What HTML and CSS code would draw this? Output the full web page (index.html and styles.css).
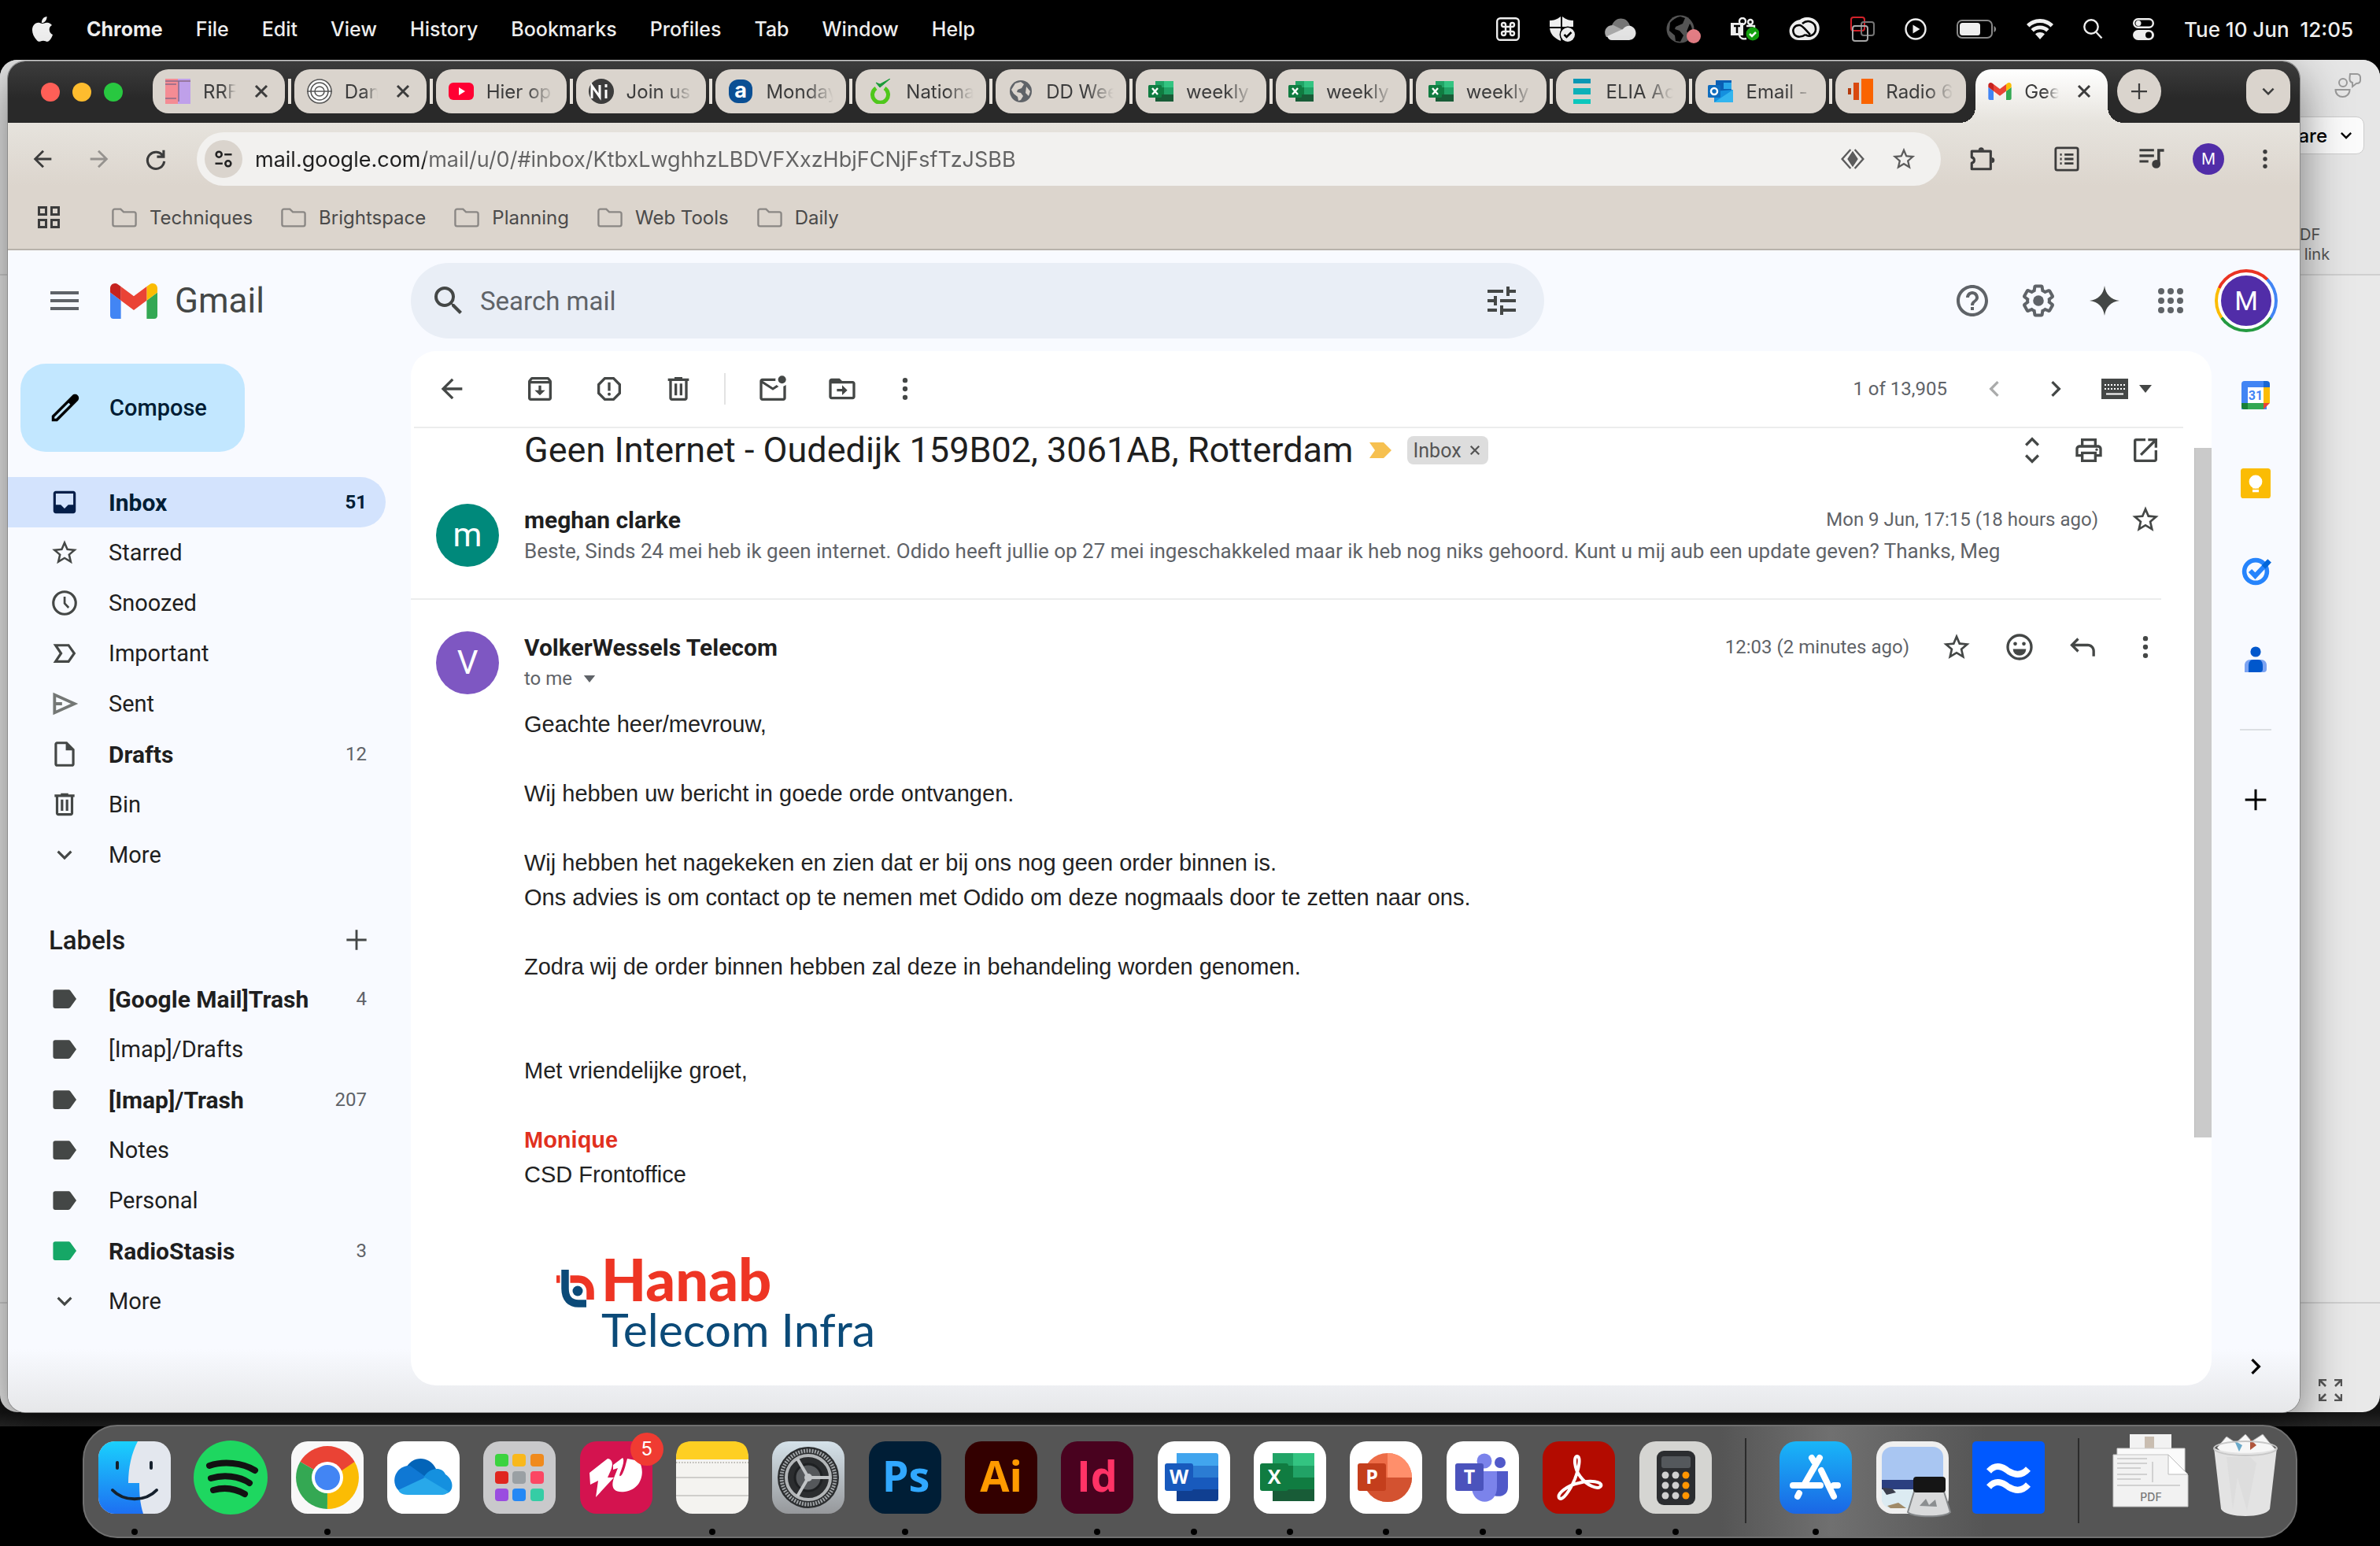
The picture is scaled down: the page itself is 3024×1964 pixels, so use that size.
FILE: index.html
```html
<!DOCTYPE html>
<html lang="en">
<head>
  <meta charset="UTF-8">
  <meta name="viewport" content="width=device-width, initial-scale=1.0">
  <title>Geen Internet - Gmail</title>
  <link rel="stylesheet" href="styles.css">
</head>
<body>
  <!-- icon sprite -->
  <svg class="sprite" aria-hidden="true">
    <symbol id="i-menu" viewBox="0 0 24 24"><path d="M3 18h18v-2H3v2zm0-5h18v-2H3v2zm0-7v2h18V6H3z"/></symbol>
    <symbol id="i-search" viewBox="0 0 24 24"><path d="M15.5 14h-.79l-.28-.27A6.471 6.471 0 0 0 16 9.5 6.5 6.5 0 1 0 9.5 16c1.61 0 3.09-.59 4.23-1.57l.27.28v.79l5 4.99L20.49 19l-4.99-5zm-6 0C7.01 14 5 11.99 5 9.5S7.01 5 9.5 5 14 7.01 14 9.5 11.99 14 9.5 14z"/></symbol>
    <symbol id="i-tune" viewBox="0 0 24 24"><path d="M3 17v2h6v-2H3zM3 5v2h10V5H3zm10 16v-2h8v-2h-8v-2h-2v6h2zM7 9v2H3v2h4v2h2V9H7zm14 4v-2H11v2h10zm-6-4h2V7h4V5h-4V3h-2v6z"/></symbol>
    <symbol id="i-help" viewBox="0 0 24 24"><path d="M11 18h2v-2h-2v2zm1-16C6.48 2 2 6.48 2 12s4.48 10 10 10 10-4.48 10-10S17.52 2 12 2zm0 18c-4.41 0-8-3.59-8-8s3.59-8 8-8 8 3.59 8 8-3.59 8-8 8zm0-14c-2.21 0-4 1.79-4 4h2c0-1.1.9-2 2-2s2 .9 2 2c0 2-3 1.75-3 5h2c0-2.25 3-2.5 3-5 0-2.21-1.79-4-4-4z"/></symbol>
    <symbol id="i-gear" viewBox="0 0 24 24"><path d="M13.85 22.25h-3.7c-.74 0-1.36-.54-1.45-1.27l-.27-1.89c-.27-.14-.53-.29-.79-.46l-1.8.72c-.7.26-1.47-.03-1.81-.65L2.2 15.53c-.35-.66-.2-1.44.36-1.88l1.53-1.19c-.01-.15-.02-.3-.02-.46 0-.15.01-.31.02-.46l-1.52-1.19c-.59-.45-.74-1.26-.37-1.88l1.85-3.19c.34-.62 1.11-.9 1.79-.63l1.81.73c.26-.17.52-.32.78-.46l.27-1.91c.09-.7.71-1.25 1.44-1.25h3.7c.74 0 1.36.54 1.45 1.27l.27 1.89c.27.14.53.29.79.46l1.8-.72c.71-.26 1.48.03 1.82.65l1.84 3.18c.36.66.2 1.44-.36 1.88l-1.52 1.19c.01.15.02.3.02.46s-.01.31-.02.46l1.52 1.19c.56.45.72 1.23.37 1.86l-1.86 3.22c-.34.62-1.11.9-1.8.63l-1.8-.72c-.26.17-.52.32-.78.46l-.27 1.91c-.1.68-.72 1.22-1.46 1.22zm-3.23-2h2.76l.37-2.55.53-.22c.44-.18.88-.44 1.34-.78l.45-.34 2.38.96 1.38-2.4-2.03-1.58.07-.56c.03-.26.06-.51.06-.78s-.03-.53-.06-.78l-.07-.56 2.03-1.58-1.39-2.4-2.39.96-.45-.35c-.42-.32-.87-.58-1.33-.77l-.52-.22-.37-2.55h-2.76l-.37 2.55-.53.21c-.44.19-.88.44-1.34.79l-.45.33-2.38-.95-1.39 2.39 2.03 1.58-.07.56a7 7 0 0 0-.06.79c0 .26.02.53.06.78l.07.56-2.03 1.58 1.38 2.4 2.39-.96.45.35c.43.33.86.58 1.33.77l.53.22.38 2.55z"/><circle cx="12" cy="12" r="3.4"/></symbol>
    <symbol id="i-spark" viewBox="0 0 24 24"><path d="M12 2.5c.8 5.6 3.9 8.700 9.500 9.500-5.600.8-8.700 3.900-9.500 9.500-.8-5.600-3.900-8.700-9.500-9.500 5.600-.8 8.700-3.900 9.500-9.500z"/></symbol>
    <symbol id="i-apps" viewBox="0 0 24 24"><circle cx="6" cy="6" r="2"/><circle cx="12" cy="6" r="2"/><circle cx="18" cy="6" r="2"/><circle cx="6" cy="12" r="2"/><circle cx="12" cy="12" r="2"/><circle cx="18" cy="12" r="2"/><circle cx="6" cy="18" r="2"/><circle cx="12" cy="18" r="2"/><circle cx="18" cy="18" r="2"/></symbol>
    <symbol id="i-pencil" viewBox="0 0 24 24"><path fill-rule="evenodd" d="M20.200 3.800c-1-1-2.600-1-3.600 0L3 17.300V21h3.700L20.200 7.400c1-1 1-2.600 0-3.600zM5.900 19.200H4.800v-1.100L14.200 8.700l1.100 1.100z"/></symbol>
    <symbol id="i-inbox" viewBox="0 0 24 24"><path d="M19 3H5c-1.100 0-2 .9-2 2v14c0 1.100.9 2 2 2h14c1.100 0 2-.9 2-2V5c0-1.100-.9-2-2-2zm0 11h-4l-3 3-3-3H5V5h14v9z"/></symbol>
    <symbol id="i-star" viewBox="0 0 24 24"><path d="M22 9.240l-7.190-.62L12 2 9.190 8.630 2 9.240l5.460 4.730L5.820 21 12 17.270 18.180 21l-1.630-7.030L22 9.240zM12 15.400l-3.760 2.270 1-4.280-3.320-2.880 4.380-.38L12 6.100l1.710 4.040 4.380.38-3.320 2.880 1 4.280L12 15.400z"/></symbol>
    <symbol id="i-clock" viewBox="0 0 24 24"><circle cx="12" cy="12" r="9" fill="none" stroke="currentColor" stroke-width="2"/><path d="M11.200 7h1.700v5l3 3.200-1.200 1.200-3.500-3.700z"/></symbol>
    <symbol id="i-important" viewBox="0 0 24 24"><path fill="none" stroke="currentColor" stroke-width="2" d="M4.800 5.500h10.400l4.600 6.500-4.600 6.500H4.800L9.200 12z"/></symbol>
    <symbol id="i-send" viewBox="0 0 24 24"><path fill="none" stroke="currentColor" stroke-width="2.400" d="M4 4.800v14.400L20 12zM4 12h6"/></symbol>
    <symbol id="i-file" viewBox="0 0 24 24"><path d="M14 2H6c-1.100 0-2 .9-2 2v16c0 1.100.9 2 2 2h12c1.100 0 2-.9 2-2V8l-6-6zM6 20V4h7v5h5v11H6z"/></symbol>
    <symbol id="i-bin" viewBox="0 0 24 24"><path d="M9 3v1H4v2h1v13c0 1.100.9 2 2 2h10c1.100 0 2-.9 2-2V6h1V4h-5V3H9zM7 6h10v13H7V6zm2 2v9h2V8H9zm4 0v9h2V8h-2z"/></symbol>
    <symbol id="i-down" viewBox="0 0 24 24"><path d="M16.590 8.590L12 13.170 7.410 8.590 6 10l6 6 6-6z"/></symbol>
    <symbol id="i-left" viewBox="0 0 24 24"><path d="M15.410 7.410L14 6l-6 6 6 6 1.410-1.410L10.830 12z"/></symbol>
    <symbol id="i-right" viewBox="0 0 24 24"><path d="M10 6L8.590 7.410 13.170 12l-4.580 4.590L10 18l6-6z"/></symbol>
    <symbol id="i-plus" viewBox="0 0 24 24"><path d="M20 11.100h-7.100V4h-1.800v7.100H4v1.800h7.100V20h1.800v-7.100H20z"/></symbol>
    <symbol id="i-label" viewBox="0 0 24 24"><path d="M4.500 4.500H15c.7 0 1.300.3 1.700.9L21.500 12l-4.800 6.600c-.4.600-1 .9-1.700.9H4.500c-1 0-1.700-.7-1.700-1.700V6.200c0-1 .7-1.700 1.700-1.700z"/></symbol>
    <symbol id="i-back" viewBox="0 0 24 24"><path d="M20 11H7.830l5.590-5.590L12 4l-8 8 8 8 1.410-1.410L7.830 13H20z"/></symbol>
    <symbol id="i-archive" viewBox="0 0 24 24"><path d="M20.540 5.230l-1.390-1.680C18.880 3.210 18.470 3 18 3H6c-.47 0-.88.21-1.160.55L3.460 5.230C3.170 5.570 3 6.020 3 6.500V19c0 1.100.9 2 2 2h14c1.100 0 2-.9 2-2V6.500c0-.48-.17-.93-.46-1.270zM6.240 5h11.520l.83 1H5.420l.82-1zM5 19V8h14v11H5z"/><path d="M13 9.500h-2V13H8l4 4 4-4h-3z"/></symbol>
    <symbol id="i-spam" viewBox="0 0 24 24"><path d="M15.730 3H8.270L3 8.270v7.460L8.270 21h7.460L21 15.730V8.270L15.730 3zM19 14.900L14.900 19H9.100L5 14.900V9.100L9.100 5h5.800L19 9.100v5.800z"/><path d="M11 7h2v6.500h-2z"/><circle cx="12" cy="16" r="1.200"/></symbol>
    <symbol id="i-unread" viewBox="0 0 24 24"><path d="M20 10v9H4V8l8 5 4.500-2.800a5 5 0 0 1-1.600-1.200L12 10.900 4.400 6H14a5 5 0 0 1 .1-2H4c-1.100 0-2 .9-2 2v13c0 1.100.9 2 2 2h16c1.100 0 2-.9 2-2V9c-.6.500-1.300.8-2 1z"/><circle cx="19" cy="5" r="3"/></symbol>
    <symbol id="i-move" viewBox="0 0 24 24"><path d="M20 6h-8l-2-2H4c-1.100 0-2 .9-2 2v12c0 1.100.9 2 2 2h16c1.100 0 2-.9 2-2V8c0-1.100-.9-2-2-2zm0 12H4V8h16v10z"/><path d="M12 9.200V12H8v2h4v2.800l4-3.800z"/></symbol>
    <symbol id="i-dots" viewBox="0 0 24 24"><circle cx="12" cy="5.500" r="1.900"/><circle cx="12" cy="12" r="1.900"/><circle cx="12" cy="18.500" r="1.900"/></symbol>
    <symbol id="i-keyboard" viewBox="0 0 34 26"><path d="M0 0h34v26H0z"/><path d="M4 8h26M4 13h26" stroke="#fff" stroke-width="2" stroke-dasharray="2 2"/><path d="M6 19.500h22" stroke="#fff" stroke-width="2"/></symbol>
    <symbol id="i-caret" viewBox="0 0 16 10"><path d="M0 0h16L8 10z"/></symbol>
    <symbol id="i-expand" viewBox="0 0 24 24"><path d="M12 4.800l4 4L17.400 7.400 12 2 6.600 7.400 8 8.800zM12 19.200l-4-4-1.400 1.400L12 22l5.400-5.400-1.400-1.400z"/></symbol>
    <symbol id="i-print" viewBox="0 0 24 24"><path d="M19 8h-1V3H6v5H5c-1.660 0-3 1.340-3 3v6h4v4h12v-4h4v-6c0-1.660-1.340-3-3-3zM8 5h8v3H8V5zm8 14H8v-4h8v4zm2-4v-2H6v2H4v-4c0-.55.45-1 1-1h14c.55 0 1 .45 1 1v4h-2z"/><circle cx="18" cy="11.500" r="1"/></symbol>
    <symbol id="i-popout" viewBox="0 0 24 24"><path d="M19 19H5V5h7V3H5a2 2 0 0 0-2 2v14a2 2 0 0 0 2 2h14c1.100 0 2-.9 2-2v-7h-2v7zM14 3v2h3.590l-9.830 9.830 1.410 1.410L19 6.410V10h2V3h-7z"/></symbol>
    <symbol id="i-smile" viewBox="0 0 24 24"><circle cx="12" cy="12" r="9" fill="none" stroke="currentColor" stroke-width="2"/><circle cx="8.700" cy="9.500" r="1.400"/><circle cx="15.300" cy="9.500" r="1.400"/><path d="M7 13.500h10a5 5 0 0 1-10 0z"/></symbol>
    <symbol id="i-reply" viewBox="0 0 24 24"><path d="M8 5L2.500 10.500 8 16l1.400-1.400-3.100-3.100H16c2 0 3.500 1.500 3.500 3.500v4h2v-4c0-3-2.500-5.500-5.500-5.500H6.300l3.100-3.100z"/></symbol>
    <symbol id="i-x" viewBox="0 0 24 24"><path d="M5 5l14 14M19 5L5 19" fill="none" stroke="currentColor" stroke-width="3"/></symbol>
    <symbol id="i-folder" viewBox="0 0 34 26"><path d="M4 1.500h8l4 4h14a2.500 2.500 0 0 1 2.500 2.500v14a2.500 2.500 0 0 1-2.500 2.500H4A2.500 2.500 0 0 1 1.500 22V4A2.500 2.500 0 0 1 4 1.500z" fill="none" stroke="currentColor" stroke-width="2.500"/></symbol>
    <symbol id="i-m" viewBox="52 42 88 66"><path fill="#4285f4" d="M58 108h14V74L52 59v43c0 3.320 2.690 6 6 6"/><path fill="#34a853" d="M120 108h14c3.320 0 6-2.690 6-6V59l-20 15"/><path fill="#fbbc04" d="M120 48v26l20-15v-8c0-7.420-8.470-11.650-14.400-7.200"/><path fill="#ea4335" d="M72 74V48l24 18 24-18v26L96 92"/><path fill="#c5221f" d="M52 51v8l20 15V48l-5.600-4.200c-5.940-4.450-14.400-.22-14.400 7.200"/></symbol>
    <symbol id="i-excel" viewBox="0 0 32 32"><path fill="#21a366" d="M9 3h23v26H9z"/><path fill="#33c481" d="M20 3h12v8H20z"/><path fill="#107c41" d="M9 11h11v9H9z"/><path fill="#185c37" d="M9 20h23v9H9z"/><rect y="8" width="17" height="16" rx="1.500" fill="#107c41"/><path d="M5 12l7 8M12 12l-7 8" stroke="#fff" stroke-width="2.400"/></symbol>
    <symbol id="i-globe" viewBox="0 0 32 32"><circle cx="16" cy="16" r="14" fill="currentColor"/><path fill="#dad4cd" d="M9 6l7-2 4 3-3 5-5 2-1 3 5 1 3 4-3 5-3 1-1-5-5-4-3-5zM23 10l5 6-2 6-4-4z"/></symbol>
  </svg>

  <header class="menubar">
    <nav class="menus">
      <svg class="apple" viewBox="0 0 28 32"><path d="M19.500 0c.2 2.500-.8 4.600-2 6-1.200 1.300-2.900 2.200-4.600 2-.2-2.300.8-4.500 2-5.800C16.100.9 18 .1 19.500 0zM26 11c-2.200 1.400-3.400 3.200-3.300 5.800.1 3 1.700 5 4.300 6.200-1 3-2.400 5.500-4.300 7.500-1.700 1.800-3.200 1.600-5 .8-1.900-.8-3.600-.8-5.600 0-2.200 1-3.600.7-5.200-1C.7 24-.6 15.500 2.800 11c1.800-2.400 4-3.300 6.300-3.200 2 .1 3.600 1.300 4.900 1.300 1.200 0 3.400-1.500 6-1.300 2.400.2 4.600 1.200 6 3.200z"/></svg>
      <button class="menu app">Chrome</button>
      <button class="menu">File</button>
      <button class="menu">Edit</button>
      <button class="menu">View</button>
      <button class="menu">History</button>
      <button class="menu">Bookmarks</button>
      <button class="menu">Profiles</button>
      <button class="menu">Tab</button>
      <button class="menu">Window</button>
      <button class="menu">Help</button>
    </nav>
    <div class="status">
      <svg width="30" height="30" viewBox="0 0 30 30" class="line"><rect x="1.200" y="1.200" width="27.600" height="27.600" rx="4"/><path d="M12 12V9.500A2.500 2.500 0 1 0 9.500 12h11A2.500 2.500 0 1 0 18 9.500v11a2.500 2.500 0 1 0 2.500-2.500h-11a2.500 2.500 0 1 0 2.500 2.500z"/></svg>
      <svg width="32" height="32" viewBox="0 0 32 32"><path d="M14 0v13H0V5c5 0 9-1 14-5zM16 0c5 4 9 5 14 5v8H16zM0 15h14v16C5 27 1 22 0 15z"/><circle cx="23" cy="23" r="10.500" fill="#000"/><circle cx="23" cy="23" r="9"/><path d="M18.500 23l3 3 6-6" fill="none" stroke="#000" stroke-width="2.500"/></svg>
      <svg width="40" height="28" viewBox="0 0 40 28"><path fill="#777" d="M9 9C12 2 18-1 24 1c4 1 7 5 8 9l-12 6z"/><path fill="#aaa" d="M2 24C-3 16 3 8 11 9l12 6-20 9z"/><path fill="#e6e6e6" d="M3 23l20-9c4-5 9-5 12-3 7 4 6 16-4 17H9c-3 0-5-2-6-5z"/></svg>
      <svg width="44" height="38" viewBox="0 0 44 38"><circle cx="18" cy="19" r="17.500" fill="#555"/><path fill="#000" d="M5 11c3-4 8-7 13-8l6 2-3 7-9 4-1 3 6 2 5 6-4 8-6-1-1-7-7-6zM30 12c3 4 4 10 2 14l-6-4z"/><circle cx="35" cy="28" r="9" fill="#e67f86"/></svg>
      <svg width="36" height="30" viewBox="0 0 36 30"><g class="line"><circle cx="15" cy="5" r="4"/><circle cx="25" cy="6" r="3"/><path d="M20 11h10v9M11 23c1 4 5 5 9 4"/></g><path d="M0 7h16v16H0z"/><path d="M4 11h8M8 11v9" stroke="#000" stroke-width="2.500"/><circle cx="28" cy="21" r="8.500" fill="#13a10e"/><path d="M24 21l3 3 5-5" fill="none" stroke="#fff" stroke-width="2.500"/></svg>
      <svg width="40" height="30" viewBox="0 0 40 30"><path d="M14 3C20-2 32-1 37 7c5 9-1 22-13 22H13C4 29-1 22 1 14 3 8 8 4 14 3z"/><path d="M21 22c-4 3-11 4-14 0-4-6 0-13 7-12 4 1 7 6 13 12M17 8c7-6 17-2 17 7 0 7-8 11-13 7" fill="none" stroke="#000" stroke-width="2.500"/></svg>
      <svg width="31" height="32" viewBox="0 0 31 32" fill="none" stroke-width="2"><rect x="1" y="1" width="17" height="17" rx="3" stroke="#d3222a"/><rect x="14" y="7" width="16" height="17" rx="3" stroke="#777"/><rect x="3" y="12" width="19" height="19" rx="3" stroke="#aaa"/></svg>
      <svg width="28" height="28" viewBox="0 0 28 28"><circle cx="14" cy="14" r="12.500" class="line"/><path d="M10.500 8.500v11l9-5.500z"/></svg>
      <svg width="51" height="24" viewBox="0 0 51 24"><rect x="1" y="1" width="44" height="22" rx="6" fill="none" stroke="#8a8a8a" stroke-width="2"/><rect x="4" y="4" width="26" height="16" rx="3.500"/><path fill="#8a8a8a" d="M47.500 8c3.500 1.500 3.500 6.500 0 8z"/></svg>
      <svg width="34" height="26" viewBox="0 0 34 26"><path d="M17 0c7 0 13 3 17 7l-3.500 3.500A19 19 0 0 0 17 5 19 19 0 0 0 3.500 10.500L0 7c4-4 10-7 17-7zm0 8.500c4.500 0 8.500 1.700 11.500 4.500L25 16.500c-2-2-5-3.200-8-3.200s-6 1.200-8 3.200L5.500 13c3-2.800 7-4.500 11.500-4.500zm0 8.500c2.300 0 4.300.9 6 2.300L17 26l-6-6.700c1.700-1.400 3.700-2.300 6-2.300z"/></svg>
      <svg width="25" height="26" viewBox="0 0 25 26"><g class="line"><circle cx="10" cy="10" r="8.700"/><path d="M16.500 17l7 7.500"/></g></svg>
      <svg width="27" height="28" viewBox="0 0 27 28"><rect x="1.200" y="1.200" width="24.600" height="10.600" rx="5.300" class="line"/><circle cx="7" cy="6.500" r="3.500"/><rect y="15" width="27" height="13" rx="6.500"/><circle cx="20" cy="21.500" r="4" fill="#000"/></svg>
      <time>Tue 10 Jun&nbsp; 12:05</time>
    </div>
  </header>

  <main class="desktop">
    <div class="window-dark"></div>

    <section class="window-back">
      <div class="back-top">
        <svg width="34" height="34" viewBox="0 0 34 34" class="people"><circle cx="11" cy="13" r="5"/><path d="M1.500 22h18c0 12-18 12-18 0zM20 2h9c2 0 4 2 4 4v4c0 3-2 4-5 4l-5 4v-5c-4-1-4-4-3-11z"/></svg>
        <button class="share">are <svg width="28" height="28"><use href="#i-down"/></svg></button>
        <p class="pdf-link">DF<br>&nbsp;link</p>
      </div>
      <div class="back-bottom">
        <svg width="30" height="28" viewBox="0 0 30 28"><path d="M10 1H1v8M1 1l8 8M20 1h9v8M29 1l-8 8M10 27H1v-8M1 27l8-8M20 27h9v-8M29 27l-8-8"/></svg>
      </div>
    </section>

    <section class="window">
      <div class="tabstrip">
        <div class="lights"><button class="red" aria-label="Close"></button><button class="yellow" aria-label="Minimise"></button><button class="green" aria-label="Zoom"></button></div>
        <div class="tabs">
          <div class="tab"><svg viewBox="0 0 32 32"><path fill="#f48c94" d="M0 0h16v32H0z"/><path fill="#bfa0ea" d="M16 0h16v32H16z"/><path d="M0 3h32M0 7h14M17 3v26M0 25h14" stroke="#8a6a86" stroke-width="1.500"/></svg><a href="#">RRF</a><button class="close" aria-label="Close tab"><svg><use href="#i-x"/></svg></button></div>
          <div class="tab"><svg viewBox="0 0 32 32"><g fill="#fff" stroke="#555" stroke-width="1.500"><circle cx="16" cy="16" r="15"/><circle cx="16" cy="16" r="11"/><circle cx="16" cy="16" r="6"/><path d="M0 16h32"/></g></svg><a href="#">Dan</a><button class="close" aria-label="Close tab"><svg><use href="#i-x"/></svg></button></div>
          <div class="tab"><svg viewBox="0 0 32 32"><rect y="5" width="32" height="22" rx="6" fill="#f03"/><path fill="#fff" d="M13 11v10l8-5z"/></svg><a href="#">Hier op</a></div>
          <div class="tab"><svg viewBox="0 0 32 32"><circle cx="16" cy="16" r="16"/><path d="M4 25V9l10 14V8M22 14v11M22 7v4" fill="none" stroke="#fff" stroke-width="3"/></svg><a href="#">Join us</a></div>
          <div class="tab"><svg viewBox="0 0 32 32"><rect x="1" y="1" width="30" height="30" rx="12" fill="#0a4f94"/><text x="16" y="24" text-anchor="middle" class="fav-letter">a</text></svg><a href="#">Monday</a></div>
          <div class="tab"><svg viewBox="0 0 32 32"><path d="M21 12a10 10 0 1 1-11 0" fill="none" stroke="#4fc71c" stroke-width="5"/><path d="M10 5l5 6L28 0 15 7z" fill="#1b9b3a" stroke="#1b9b3a"/></svg><a href="#">National</a></div>
          <div class="tab"><svg class="fav-globe"><use href="#i-globe"/></svg><a href="#">DD Week</a></div>
          <div class="tab"><svg><use href="#i-excel"/></svg><a href="#">weekly</a></div>
          <div class="tab"><svg><use href="#i-excel"/></svg><a href="#">weekly</a></div>
          <div class="tab"><svg><use href="#i-excel"/></svg><a href="#">weekly</a></div>
          <div class="tab"><svg viewBox="0 0 32 32"><path fill="#0897b4" d="M6 0h22v6H6z"/><path fill="#0bb0b8" d="M6 12h22v8H6z"/><path fill="#0cc7bd" d="M6 26h22v6H6z"/></svg><a href="#">ELIA Ac</a></div>
          <div class="tab"><svg viewBox="0 0 32 32"><path fill="#0a5fb4" d="M10 2h20v14H10z"/><path fill="#28a8ea" d="M20 5h10v8H20z"/><path fill="#1490df" d="M8 16l24-2v16H8z"/><path fill="#50d9ff" d="M8 30l24-16v16z" opacity=".5"/><rect y="8" width="16" height="16" rx="1.500" fill="#0f6cbd"/><circle cx="8" cy="16" r="4" fill="none" stroke="#fff" stroke-width="2.500"/></svg><a href="#">Email -</a></div>
          <div class="tab"><svg viewBox="0 0 32 32"><path fill="#b33a0c" d="M0 12h4v8H0z"/><path fill="#d9480f" d="M7 5h7v22H7z"/><path fill="#fa6400" d="M17 0h15v32H17z"/></svg><a href="#">Radio 6</a></div>
          <div class="tab active"><svg class="fav-m"><use href="#i-m"/></svg><a href="#">Geen</a><button class="close" aria-label="Close tab"><svg><use href="#i-x"/></svg></button></div>
        </div>
        <div class="tab-actions">
          <button class="tab-new" aria-label="New tab"><svg><use href="#i-plus"/></svg></button>
          <button class="tab-list" aria-label="Search tabs"><svg><use href="#i-down"/></svg></button>
        </div>
      </div>

      <div class="toolbar">
        <div class="nav-row">
          <div class="nav-buttons">
            <button aria-label="Back"><svg><use href="#i-back"/></svg></button>
            <button aria-label="Forward" class="off"><svg class="flip"><use href="#i-back"/></svg></button>
            <button aria-label="Reload"><svg viewBox="0 0 24 24"><path d="M19 4v6h-6M18.500 9.500A7.500 7.500 0 1 0 19.500 14" fill="none" stroke="currentColor" stroke-width="2.200"/></svg></button>
          </div>
          <div class="omnibox">
            <button class="site-info" aria-label="Site information"><svg viewBox="0 0 24 24" fill="none" stroke="currentColor" stroke-width="2.200"><circle cx="7" cy="7" r="3"/><path d="M13 7h8M3 17h8"/><circle cx="17" cy="17" r="3"/></svg></button>
            <input class="url" type="text" aria-label="Address" value="mail.google.com/mail/u/0/#inbox/KtbxLwghhzLBDVFXxzHbjFCNjFsfTzJSBB">
            <button aria-label="Open in app"><svg viewBox="0 0 24 24" fill="none" stroke="currentColor" stroke-width="1.800"><path d="M10 3l-8 9 8 9M14 3l8 9-8 9"/><path d="M12 6l4 6-4 6-4-6z" fill="currentColor"/></svg></button>
            <button aria-label="Bookmark"><svg class="bookmark-star"><use href="#i-star"/></svg></button>
          </div>
          <div class="tools">
            <button class="wide" aria-label="Extensions"><svg viewBox="0 0 24 24"><path d="M3 5h17v16H3v-5.500c3-.5 3-4.500 0-5z" fill="none" stroke="currentColor" stroke-width="2.200" stroke-linejoin="round"/><path d="M9 4a2.500 2.500 0 0 1 5 0zM21 10.500a2.500 2.500 0 0 1 0 5z"/></svg></button>
            <button class="wide" aria-label="Reading list"><svg viewBox="0 0 24 24" fill="none" stroke="currentColor" stroke-width="2"><rect x="2" y="2" width="20" height="20" rx="1.500"/><path d="M6 8h1.500M6 12h1.500M6 16h1.500M10 8h8M10 12h8M10 16h8"/></svg></button>
            <button aria-label="Media"><svg viewBox="0 0 24 24"><path d="M1 3h13v2.200H1zM1 8h13v2.200H1zM1 13h8v2.200H1zM17 3h6v2.500h-3.500V16H17z"/><circle cx="16" cy="16.500" r="3.800"/></svg></button>
            <button class="profile">M</button>
            <button aria-label="Chrome menu"><svg><use href="#i-dots"/></svg></button>
          </div>
        </div>
        <nav class="bookmarks">
          <button class="groups" aria-label="Tab groups"><svg viewBox="0 0 28 28" fill="none" stroke="currentColor" stroke-width="3"><path d="M1.500 1.500h9v9h-9zM17.500 1.500h9v9h-9zM1.500 17.500h9v9h-9zM17.500 17.500h9v9h-9z"/></svg></button>
          <a href="#"><svg><use href="#i-folder"/></svg>Techniques</a>
          <a href="#"><svg><use href="#i-folder"/></svg>Brightspace</a>
          <a href="#"><svg><use href="#i-folder"/></svg>Planning</a>
          <a href="#"><svg><use href="#i-folder"/></svg>Web Tools</a>
          <a href="#"><svg><use href="#i-folder"/></svg>Daily</a>
        </nav>
      </div>

      <div class="gmail">
        <header class="gm-header">
          <div class="brand">
            <button aria-label="Main menu"><svg><use href="#i-menu"/></svg></button>
            <a href="#" class="logo"><svg><use href="#i-m"/></svg>Gmail</a>
          </div>
          <form class="search">
            <button type="button" aria-label="Search"><svg><use href="#i-search"/></svg></button>
            <input type="text" placeholder="Search mail" aria-label="Search mail">
            <button type="button" class="tune" aria-label="Search options"><svg><use href="#i-tune"/></svg></button>
          </form>
          <div class="gm-tools">
            <button aria-label="Support"><svg><use href="#i-help"/></svg></button>
            <button aria-label="Settings"><svg><use href="#i-gear"/></svg></button>
            <button class="dark" aria-label="Gemini"><svg><use href="#i-spark"/></svg></button>
            <button aria-label="Google apps"><svg><use href="#i-apps"/></svg></button>
            <button class="account" aria-label="Account"><span>M</span></button>
          </div>
        </header>

        <div class="gm-body">
          <aside class="sidebar">
            <button class="compose"><svg><use href="#i-pencil"/></svg>Compose</button>
            <nav>
              <a href="#" class="row current"><svg><use href="#i-inbox"/></svg><span>Inbox</span><em>51</em></a>
              <a href="#" class="row"><svg><use href="#i-star"/></svg><span>Starred</span></a>
              <a href="#" class="row"><svg><use href="#i-clock"/></svg><span>Snoozed</span></a>
              <a href="#" class="row"><svg><use href="#i-important"/></svg><span>Important</span></a>
              <a href="#" class="row"><svg class="soft"><use href="#i-send"/></svg><span>Sent</span></a>
              <a href="#" class="row bold"><svg><use href="#i-file"/></svg><span>Drafts</span><em>12</em></a>
              <a href="#" class="row"><svg><use href="#i-bin"/></svg><span>Bin</span></a>
              <a href="#" class="row"><svg><use href="#i-down"/></svg><span>More</span></a>
            </nav>
            <div class="labels-head"><h2>Labels</h2><button aria-label="Create new label"><svg><use href="#i-plus"/></svg></button></div>
            <nav>
              <a href="#" class="row bold"><svg><use href="#i-label"/></svg><span>[Google Mail]Trash</span><em>4</em></a>
              <a href="#" class="row"><svg><use href="#i-label"/></svg><span>[Imap]/Drafts</span></a>
              <a href="#" class="row bold"><svg><use href="#i-label"/></svg><span>[Imap]/Trash</span><em>207</em></a>
              <a href="#" class="row"><svg><use href="#i-label"/></svg><span>Notes</span></a>
              <a href="#" class="row"><svg><use href="#i-label"/></svg><span>Personal</span></a>
              <a href="#" class="row bold"><svg class="green-label"><use href="#i-label"/></svg><span>RadioStasis</span><em>3</em></a>
              <a href="#" class="row"><svg><use href="#i-down"/></svg><span>More</span></a>
            </nav>
          </aside>

          <article class="panel">
            <div class="panel-bar">
              <button class="to-inbox" aria-label="Back to Inbox"><svg><use href="#i-back"/></svg></button>
              <button aria-label="Archive"><svg><use href="#i-archive"/></svg></button>
              <button aria-label="Report spam"><svg><use href="#i-spam"/></svg></button>
              <button aria-label="Delete"><svg><use href="#i-bin"/></svg></button>
              <i class="divider"></i>
              <button aria-label="Mark as unread"><svg><use href="#i-unread"/></svg></button>
              <button class="move" aria-label="Move to"><svg><use href="#i-move"/></svg></button>
              <button aria-label="More"><svg><use href="#i-dots"/></svg></button>
              <span class="count">1 of 13,905</span>
              <button class="off" aria-label="Newer"><svg><use href="#i-left"/></svg></button>
              <button aria-label="Older"><svg><use href="#i-right"/></svg></button>
              <button class="input-tool" aria-label="Input tools"><svg class="keyboard"><use href="#i-keyboard"/></svg><svg class="caret"><use href="#i-caret"/></svg></button>
            </div>
            <div class="panel-scroll">
              <div class="thread">
                <div class="subject">
                  <h1>Geen Internet - Oudedijk 159B02, 3061AB, Rotterdam</h1>
                  <svg class="marker" viewBox="0 0 28 20"><path fill="#f6c050" d="M0 0h18l10 10-10 10H0l7-10z"/></svg>
                  <span class="chip">Inbox <button aria-label="Remove label"><svg><use href="#i-x"/></svg></button></span>
                  <div class="actions">
                    <button aria-label="Expand all"><svg><use href="#i-expand"/></svg></button>
                    <button aria-label="Print all"><svg><use href="#i-print"/></svg></button>
                    <button aria-label="In new window"><svg><use href="#i-popout"/></svg></button>
                  </div>
                </div>

                <section class="message folded">
                  <div class="avatar teal">m</div>
                  <div class="message-main">
                    <div class="message-head"><h3>meghan clarke</h3><time>Mon 9 Jun, 17:15 (18 hours ago)</time><button aria-label="Star"><svg><use href="#i-star"/></svg></button></div>
                    <p class="snippet">Beste, Sinds 24 mei heb ik geen internet. Odido heeft jullie op 27 mei ingeschakkeled maar ik heb nog niks gehoord. Kunt u mij aub een update geven? Thanks, Meg</p>
                  </div>
                </section>

                <section class="message">
                  <div class="avatar purple">V</div>
                  <div class="message-main">
                    <div class="message-head"><h3>VolkerWessels Telecom</h3><time>12:03 (2 minutes ago)</time><button aria-label="Star"><svg><use href="#i-star"/></svg></button><button aria-label="Add reaction"><svg><use href="#i-smile"/></svg></button><button aria-label="Reply"><svg><use href="#i-reply"/></svg></button><button aria-label="More"><svg><use href="#i-dots"/></svg></button></div>
                    <button class="to-me">to me <svg><use href="#i-caret"/></svg></button>
                    <div class="body">
                      <p>Geachte heer/mevrouw,</p>
                      <p>Wij hebben uw bericht in goede orde ontvangen.</p>
                      <p>Wij hebben het nagekeken en zien dat er bij ons nog geen order binnen is.<br>Ons advies is om contact op te nemen met Odido om deze nogmaals door te zetten naar ons.</p>
                      <p>Zodra wij de order binnen hebben zal deze in behandeling worden genomen.</p>
                      <p class="closing">Met vriendelijke groet,</p>
                      <p><b>Monique</b><br>CSD Frontoffice</p>
                    </div>
                    <div class="hanab">
                      <svg viewBox="0 0 48 48"><path d="M0 12h28c9 0 15 7 15 16v10" fill="none" stroke="#ee3524" stroke-width="9.500"/><path d="M11 0v24c0 13 7 19 17 19h10" fill="none" stroke="#fff" stroke-width="13"/><path d="M11 0v24c0 13 7 19 17 19h10" fill="none" stroke="#0b4a78" stroke-width="9.500"/><circle cx="27" cy="27" r="6.500" fill="#0b4a78"/></svg>
                      <div><strong>Hanab</strong><span>Telecom Infra</span></div>
                    </div>
                  </div>
                </section>
              </div>
              <div class="scrollbar"></div>
            </div>
          </article>

          <aside class="addons">
            <button aria-label="Calendar"><svg viewBox="0 0 24 24"><path fill="#4285f4" d="M3 5a2 2 0 0 1 2-2h14v18H3z"/><path fill="#1967d2" d="M17 3h2a2 2 0 0 1 2 2v2h-4z"/><path fill="#fbbc04" d="M17 7h4v10h-4z"/><path fill="#34a853" d="M3 17h14v4H5a2 2 0 0 1-2-2z"/><path fill="#ea4335" d="M17 17h4l-4 4z"/><path fill="#188038" d="M3 17h4v4H5a2 2 0 0 1-2-2z"/><path fill="#fff" d="M7 7h10v10H7z"/><text x="12" y="15" text-anchor="middle" class="cal-day">31</text></svg></button>
            <button aria-label="Keep"><svg viewBox="0 0 24 24"><rect x="2.500" y="2.500" width="19" height="19" rx="1.800" fill="#fbbc04"/><circle cx="12" cy="11" r="4.200" fill="#fff"/><path fill="#fff" d="M10 13h4v2.200h-4zM10 16h4v1.600h-4z"/></svg></button>
            <button aria-label="Tasks"><svg viewBox="0 0 24 24"><circle cx="12" cy="12" r="7.200" fill="none" stroke="#2684fc" stroke-width="2.800"/><path d="M8.500 11.500l3.200 3.300L20 6" fill="none" stroke="#2684fc" stroke-width="3"/><path d="M17 9.200l3.800-4" stroke="#0066da" stroke-width="3.200"/></svg></button>
            <button aria-label="Contacts"><svg viewBox="0 0 24 24"><circle cx="12" cy="7" r="3.300" fill="#0057cc"/><path fill="#7ba3f2" d="M5 20v-4.500c0-2 1.500-3.500 3.500-3.500h7c2 0 3.500 1.500 3.500 3.500V18a2 2 0 0 1-2 2z"/><path fill="#0057cc" d="M7.500 20v-4c0-2.500 1-4 3-4h3c2 0 3 1.500 3 4v2a2 2 0 0 1-2 2z"/></svg></button>
            <hr>
            <button class="black" aria-label="Get add-ons"><svg><use href="#i-plus"/></svg></button>
            <button class="black hide" aria-label="Hide side panel"><svg><use href="#i-right"/></svg></button>
          </aside>
        </div>
      </div>
    </section>

    <nav class="dock">
      <button class="app open" aria-label="Finder"><svg viewBox="0 0 92 92"><defs><linearGradient id="gf" x2="0" y2="1"><stop stop-color="#1ad1fd"/><stop offset="1" stop-color="#1d6ff2"/></linearGradient><clipPath id="cf"><rect width="92" height="92" rx="21"/></clipPath></defs><g clip-path="url(#cf)"><path fill="#e3e7ee" d="M0 0h92v92H0z"/><path fill="url(#gf)" d="M0 0h50c-8 15-12 34-12 53h14c0 14 1 26 5 39H0z"/></g><path d="M24 27v7M67 27v7M18 62c14 15 42 15 56 0" fill="none" stroke="#15202c" stroke-width="4" stroke-linecap="round"/></svg></button>
      <button class="app" aria-label="Spotify"><svg viewBox="0 0 92 92"><circle cx="46" cy="46" r="47" fill="#1ed760"/><path d="M19 31c18-6 42-4 58 6M21 47c16-5 36-3 49 6M24 62c14-4 28-2 40 5" fill="none" stroke="#121212" stroke-width="8" stroke-linecap="round"/></svg></button>
      <button class="app open" aria-label="Chrome"><svg viewBox="0 0 92 92"><rect width="92" height="92" rx="21" fill="#f8f8f8"/><path fill="#ea4335" d="M46 46L11.400 26a40 40 0 0 1 69.200 0z"/><path fill="#34a853" d="M46 46l-.1 40A40 40 0 0 1 11.400 26z"/><path fill="#fbbc04" d="M46 46l34.600-20A40 40 0 0 1 46 86z"/><path fill="#ea4335" d="M46 26h34.600L60 40z"/><path fill="#34a853" d="M11.400 26l17.300 30L46 60z"/><path fill="#fbbc04" d="M63.300 56L46 86l4-30z"/><circle cx="46" cy="46" r="20" fill="#fff"/><circle cx="46" cy="46" r="16" fill="#4285f4"/></svg></button>
      <button class="app" aria-label="OneDrive"><svg viewBox="0 0 92 92"><rect width="92" height="92" rx="21" fill="#fff"/><path fill="#0364b8" d="M24 34c6-14 28-18 38 1l-14 16z"/><path fill="#0f78d4" d="M14 62C3 50 12 30 29 31l28 20-24 12z"/><path fill="#1490df" d="M46 46c8-14 24-14 28-4 12 8 10 22 2 24z"/><path fill="#28a8ea" d="M14 62l34-16 30 18c-3 4-7 4-10 4H26c-6 0-10-2-12-6z"/></svg></button>
      <button class="app" aria-label="Launchpad"><svg viewBox="0 0 92 92"><rect width="92" height="92" rx="21" fill="#c9c9cb"/><rect x="15" y="16" width="17" height="16" rx="4" fill="#3bd33f"/><rect x="37" y="16" width="17" height="16" rx="4" fill="#f9b81c"/><rect x="60" y="16" width="17" height="16" rx="4" fill="#f08a1c"/><rect x="15" y="38" width="17" height="16" rx="4" fill="#e0261f"/><rect x="37" y="38" width="17" height="16" rx="4" fill="#9aa0a4"/><rect x="60" y="38" width="17" height="16" rx="4" fill="#fb4763"/><rect x="15" y="60" width="17" height="16" rx="4" fill="#9a4de0"/><rect x="37" y="60" width="17" height="16" rx="4" fill="#2488f5"/><rect x="60" y="60" width="17" height="16" rx="4" fill="#35cda5"/></svg></button>
      <button class="app" aria-label="News"><svg viewBox="0 0 92 92"><rect width="92" height="92" rx="21" fill="#d4134f"/><path fill="#fff" d="M12 40l23-18c7 1 7 8 4 15l-4 9h8L20 71l3-21-10 5zM42 30l12-9c3 3 0 11-3 19-2 5 0 6 3 1 3-6 4-12 6-19l15 3c8 13 4 36-18 39-17 2-18-8-13-20l4-10-6 2z"/></svg><span class="badge">5</span></button>
      <button class="app open" aria-label="Notes"><svg viewBox="0 0 92 92"><rect width="92" height="92" rx="21" fill="#f4f3f0"/><path fill="#fecf22" d="M0 23C0 6 6 0 21 0h50c15 0 21 6 21 23z"/><path d="M0 27h92" stroke="#a8a6a0" stroke-width="1.500" stroke-dasharray="1.500 2"/><path d="M0 46h92M0 69h92" stroke="#cfcecb" stroke-width="2"/></svg></button>
      <button class="app" aria-label="System Settings"><svg viewBox="0 0 92 92"><defs><linearGradient id="gs" x2="0" y2="1"><stop stop-color="#d5e2ea"/><stop offset="1" stop-color="#96989b"/></linearGradient></defs><rect width="92" height="92" rx="21" fill="url(#gs)"/><circle cx="46" cy="46" r="39" fill="#2b2d2f"/><circle cx="46" cy="46" r="34" fill="none" stroke="#9fa3a6" stroke-width="5" stroke-dasharray="2 1.500"/><circle cx="46" cy="46" r="28" fill="none" stroke="#b3b6b8" stroke-width="4"/><circle cx="46" cy="46" r="17" fill="#55585b" stroke="#1e2022" stroke-width="3"/><path d="M46 46h28M46 46L32 22M46 46L32 70" stroke="#c1c4c6" stroke-width="4"/><circle cx="46" cy="46" r="5" fill="#c1c4c6"/></svg></button>
      <button class="app open" aria-label="Photoshop"><svg viewBox="0 0 92 92"><rect width="92" height="92" rx="21" fill="#001e36"/><text x="47" y="64" text-anchor="middle" class="adobe" fill="#31a8ff">Ps</text></svg></button>
      <button class="app" aria-label="Illustrator"><svg viewBox="0 0 92 92"><rect width="92" height="92" rx="21" fill="#330000"/><text x="46" y="64" text-anchor="middle" class="adobe" fill="#ff9a00">Ai</text></svg></button>
      <button class="app open" aria-label="InDesign"><svg viewBox="0 0 92 92"><rect width="92" height="92" rx="21" fill="#49021f"/><text x="46" y="64" text-anchor="middle" class="adobe" fill="#ff3366">Id</text></svg></button>
      <button class="app open" aria-label="Word"><svg viewBox="0 0 92 92"><rect width="92" height="92" rx="21" fill="#fff"/><path fill="#41a5ee" d="M24 15h50a3 3 0 0 1 3 3v13H24z"/><path fill="#2b7cd3" d="M24 31h53v15H24z"/><path fill="#185abd" d="M24 46h53v15H24z"/><path fill="#103f91" d="M24 61h53v12a3 3 0 0 1-3 3H24z"/><rect x="9" y="28" width="36" height="35" rx="3" fill="#185abd"/><text x="27" y="54" text-anchor="middle" class="office">W</text></svg></button>
      <button class="app open" aria-label="Excel"><svg viewBox="0 0 92 92"><rect width="92" height="92" rx="21" fill="#fff"/><path fill="#21a366" d="M24 15h53v61H24z"/><path fill="#33c481" d="M50 15h27v16H50z"/><path fill="#107c41" d="M24 31h26v30H24zM50 46h27v15H50z"/><path fill="#185c37" d="M24 61h53v15H24z"/><rect x="8" y="28" width="36" height="35" rx="3" fill="#107c41"/><text x="26" y="54" text-anchor="middle" class="office">X</text></svg></button>
      <button class="app open" aria-label="PowerPoint"><svg viewBox="0 0 92 92"><rect width="92" height="92" rx="21" fill="#fff"/><circle cx="48" cy="46" r="31" fill="#ed6c47"/><path fill="#ff8f6b" d="M48 15a31 31 0 0 1 31 31H48z"/><path fill="#d35230" d="M79 46a31 31 0 0 1-62 0z"/><rect x="10" y="28" width="36" height="35" rx="3" fill="#c43e1c"/><text x="28" y="54" text-anchor="middle" class="office">P</text></svg></button>
      <button class="app open" aria-label="Teams"><svg viewBox="0 0 92 92"><rect width="92" height="92" rx="21" fill="#fff"/><circle cx="48" cy="25" r="9.500" fill="#7b83eb"/><circle cx="68" cy="27" r="7" fill="#5059c9"/><path fill="#5059c9" d="M54 38h24v20c0 12-12 14-20 10z"/><path fill="#7b83eb" d="M32 38h32v20c0 26-32 24-32 0z"/><rect x="11" y="28" width="36" height="35" rx="3" fill="#4b53bc"/><text x="29" y="54" text-anchor="middle" class="office">T</text></svg></button>
      <button class="app open" aria-label="Acrobat"><svg viewBox="0 0 92 92"><rect width="92" height="92" rx="21" fill="#b30b00"/><path d="M21 72c4 5 14-10 20-24 5-13 8-28 3-29-5 0-4 16 4 26 8 11 22 17 26 12 3-6-14-8-28-4-14 3-28 13-25 19z" fill="none" stroke="#fff" stroke-width="4"/></svg></button>
      <button class="app open" aria-label="Calculator"><svg viewBox="0 0 92 92"><rect width="92" height="92" rx="21" fill="#d5d5d2"/><rect x="22" y="12" width="49" height="69" rx="9" fill="#2b2d30"/><rect x="28" y="19" width="37" height="15" rx="3" fill="#54585c"/><g fill="#d0d0d0"><circle cx="33" cy="43" r="4.500"/><circle cx="46" cy="43" r="4.500"/><circle cx="33" cy="56" r="4.500"/><circle cx="46" cy="56" r="4.500"/><circle cx="33" cy="69" r="4.500"/><circle cx="46" cy="69" r="4.500"/></g><g fill="#ff9500"><circle cx="59" cy="43" r="4.500"/><circle cx="59" cy="56" r="4.500"/><circle cx="59" cy="69" r="4.500"/></g></svg></button>
      <i class="dock-line"></i>
      <button class="app open" aria-label="App Store"><svg viewBox="0 0 92 92"><defs><linearGradient id="ga" x2="0" y2="1"><stop stop-color="#19b6f8"/><stop offset="1" stop-color="#1a66e5"/></linearGradient></defs><rect width="92" height="92" rx="21" fill="url(#ga)"/><path d="M51 21L32 54M41 21l3 5M17 56h35M69 56h5M53 37l16 33M25 66l-2 4" fill="none" stroke="#fff" stroke-width="8" stroke-linecap="round"/></svg></button>
      <button class="app" aria-label="Preview"><svg viewBox="0 0 92 92"><rect width="92" height="92" rx="21" fill="#efefef"/><rect x="7" y="7" width="78" height="78" rx="13" fill="#a9c6f2"/><path fill="#2b3f80" d="M7 49h78v12H7z"/><path fill="#dcebf2" d="M7 61h78v13c0 7-5 11-12 11H20C12 85 7 80 7 74z"/><path fill="#3a3d4c" d="M7 59l13 1 5 5-12 3z"/><path fill="#a08a68" d="M14 82l14-4 10 7H18z"/><path fill="#d9dadb" stroke="#85888a" stroke-width="2" d="M48 64h38l8 26c-8 7-46 7-54 0z"/><path fill="#8b8e90" d="M55 82l8-9 4 8 8-7 2 9z"/><rect x="47" y="45" width="41" height="20" rx="4" fill="#151515"/></svg></button>
      <button class="app" aria-label="Waves"><svg viewBox="0 0 92 92"><rect width="92" height="92" rx="5" fill="#0059ff"/><path d="M21 38c7-8 15-8 25 0 10 6 18 5 25-3M21 58c7-8 15-8 25 0 10 6 18 5 25-3" fill="none" stroke="#fff" stroke-width="8"/></svg></button>
      <i class="dock-line"></i>
      <button class="app" aria-label="Downloads"><svg viewBox="0 0 92 92"><path fill="#f2f2f2" d="M21-9h53v40H21z"/><path fill="#c9bdb0" d="M40-6h12v17H40z"/><path fill="#fafafa" stroke="#cfcfcf" d="M5 9h86v70H5z"/><path fill="#f2f2f2" stroke="#c4c4c4" d="M0 17h70l25 26v40H0z"/><path fill="#fff" stroke="#bbb" d="M70 17v25h25z"/><path d="M5 22h38M5 28h38M5 34h30M5 42h38M5 48h30M5 56h80M50 26v26" stroke="#c6c6c6" stroke-width="1.500"/><text x="48" y="76" text-anchor="middle" class="pdf">PDF</text></svg></button>
      <button class="app" aria-label="Bin"><svg viewBox="0 0 92 92"><path fill="#f7f7f7" stroke="#aaa" d="M10 8l12-14 12 8 12-11 8 9 14-9 8 10 8 9-14 12H22z"/><path fill="#6aa9c9" d="M32-1l10 6-4 8z"/><path fill="#b0553c" d="M52-3l8 8-8 6z"/><path fill="#e3e3e3" d="M6 8c10 9 70 9 80 0l-9 78c-6 12-56 12-62 0z"/><path fill="#d4d4d4" d="M22 20l8 66 6-40 12 42 12-60-8-8z" opacity=".4"/><ellipse cx="46" cy="9" rx="40" ry="9" fill="none" stroke="#c7c7c7" stroke-width="2"/></svg></button>
    </nav>
  </main>
</body>
</html>
```
FILE: styles.css
```css
* {
  box-sizing: border-box;
}

html, body {
  margin: 0;
  height: 100%;
}

body {
  display: flex;
  flex-direction: column;
  background: #000;
  color: #1f1f1f;
  font-family: "Inter", sans-serif;
  font-size: 24px;
  overflow: hidden;
}

h1, h2, h3, p {
  margin: 0;
  font-weight: 400;
}

a {
  color: inherit;
  text-decoration: none;
}

button {
  display: flex;
  align-items: center;
  justify-content: center;
  padding: 0;
  border: none;
  background: none;
  color: inherit;
  font: inherit;
}

input {
  border: none;
  outline: none;
  background: none;
  padding: 0;
  font: inherit;
}

svg {
  flex: none;
  fill: currentColor;
}

svg[fill="none"] {
  fill: none;
}

.sprite {
  position: absolute;
  width: 0;
  height: 0;
}

/* menu bar */
.menubar {
  flex: none;
  display: flex;
  justify-content: space-between;
  align-items: center;
  height: 76px;
  padding: 0 34px 2px 40px;
  color: #f0f0f0;
  font-size: 25px;
  font-weight: 500;
}

.menus, .status {
  display: flex;
  align-items: center;
}

.menus {
  gap: 42px;
}

.apple {
  width: 28px;
  height: 32px;
}

.menu.app {
  font-weight: 700;
}

.status {
  gap: 38px;
}

.status time {
  font-size: 26px;
}

.line {
  fill: none;
  stroke: currentColor;
  stroke-width: 2.4;
}

/* windows on the desktop */
.desktop {
  position: relative;
  flex: 1;
}

.window-dark {
  position: absolute;
  left: 0;
  right: 0;
  bottom: 152px;
  height: 60px;
  background: linear-gradient(#141414 70%, #262626);
}

.window-back {
  position: absolute;
  inset: 0 0 170px 0;
  display: flex;
  flex-direction: column;
  justify-content: space-between;
  border-radius: 22px;
  background: #e9e9e9;
  overflow: hidden;
}

.back-top {
  display: flex;
  flex-direction: column;
  align-items: flex-end;
  height: 274px;
  padding: 16px 20px 0;
  border-bottom: 2px solid #cfcfcf;
  background: #e6e6e6;
}

.people {
  margin-right: 4px;
  fill: none;
  stroke: #999;
  stroke-width: 2;
}

.share {
  width: 160px;
  height: 48px;
  margin-top: 22px;
  padding-right: 8px;
  gap: 10px;
  justify-content: flex-end;
  border: 1px solid #ccc;
  border-radius: 10px;
  background: #fbfbfb;
  color: #000;
  font-weight: 500;
}

.pdf-link {
  width: 82px;
  margin-top: 90px;
  color: #555;
  font-size: 20px;
  line-height: 25px;
}

.back-bottom {
  display: flex;
  justify-content: flex-end;
  align-items: flex-end;
  height: 140px;
  padding: 0 48px 14px;
  border-top: 2px solid #cfcfcf;
}

.back-bottom svg {
  fill: none;
  stroke: #555;
  stroke-width: 2.5;
}

.window {
  position: absolute;
  inset: 2px 102px 170px 10px;
  display: flex;
  flex-direction: column;
  border-radius: 22px;
  background: #f8faff;
  box-shadow: 0 0 0 1px #8a8a8a, 0 20px 60px rgba(0, 0, 0, .5);
  overflow: hidden;
}

/* tabs */
.tabstrip {
  flex: none;
  display: flex;
  align-items: flex-start;
  height: 78px;
  padding-top: 10px;
  background: linear-gradient(#3c3c3c, #292929 60%);
}

.lights {
  display: flex;
  align-items: center;
  gap: 16px;
  width: 184px;
  height: 58px;
  padding-left: 42px;
}

.lights button {
  width: 24px;
  height: 24px;
  border-radius: 50%;
}

.red { background: #ff5f57; }
.yellow { background: #febc2e; }
.green { background: #28c840; }

.tabs {
  flex: 1;
  display: flex;
  gap: 12px;
  min-width: 0;
}

.tab {
  position: relative;
  flex: 1;
  display: flex;
  align-items: center;
  gap: 16px;
  min-width: 0;
  height: 56px;
  padding: 0 16px;
  border-radius: 20px;
  background: #dad4cd;
  color: #3c3c3c;
}

.tab + .tab:not(.active)::before {
  content: "";
  position: absolute;
  left: -8px;
  top: 12px;
  width: 4px;
  height: 32px;
  background: #e6e1da;
}

.tab > svg {
  width: 32px;
  height: 32px;
}

.tab a {
  flex: 1;
  overflow: hidden;
  white-space: nowrap;
  mask-image: linear-gradient(90deg, #000 60%, transparent);
}

.tab .close svg {
  display: block;
  width: 24px;
  height: 24px;
}

.tab:has(.close) {
  padding-right: 18px;
}

.tab:has(.close) a {
  margin-right: 4px;
}

.tab .fav-m {
  width: 30px;
  height: 22px;
}

.fav-globe {
  color: #5f6368;
}

.fav-letter {
  fill: #fff;
  font: 700 27px "Inter", sans-serif;
}

.tab.active {
  height: 68px;
  padding-bottom: 12px;
  border-radius: 20px 20px 0 0;
  background: linear-gradient(#fff, #e6e3dd);
}

.tab.active::before, .tab.active::after {
  content: "";
  position: absolute;
  bottom: 0;
  width: 20px;
  height: 20px;
}

.tab.active::before {
  left: -20px;
  background: radial-gradient(circle at 0 0, transparent 20px, #e7e4de 20px);
}

.tab.active::after {
  right: -20px;
  background: radial-gradient(circle at 100% 0, transparent 20px, #e7e4de 20px);
}

.tab-actions {
  display: flex;
  justify-content: space-between;
  width: 244px;
  padding: 0 12px;
}

.tab-actions button {
  width: 56px;
  height: 56px;
  border-radius: 28px;
  background: #dad4cd;
  color: #3c3c3c;
}

.tab-actions .tab-list {
  border-radius: 20px;
}

.tab-actions svg {
  width: 30px;
  height: 30px;
}

/* address bar and bookmarks */
.toolbar {
  flex: none;
  height: 162px;
  border-bottom: 2px solid #b8b2ab;
  background: linear-gradient(#e6e3dd, #dcd5cd 50%);
  color: #3c3c3c;
}

.nav-row {
  display: flex;
  align-items: center;
  height: 92px;
}

.nav-buttons {
  display: flex;
  gap: 40px;
  width: 240px;
  padding-left: 28px;
}

.nav-buttons svg, .tools svg {
  width: 34px;
  height: 34px;
}

.nav-buttons button, .tools button {
  width: 32px;
}

.off {
  opacity: .45;
}

.flip {
  transform: scaleX(-1);
}

.omnibox {
  flex: 1;
  display: flex;
  align-items: center;
  gap: 32px;
  height: 68px;
  padding: 0 30px 0 10px;
  border-radius: 34px;
  background: #f2f1ef;
  color: #5c5c5c;
}

.omnibox > button svg {
  display: block;
  width: 32px;
  height: 32px;
}

.omnibox .site-info {
  width: 48px;
  height: 48px;
  border-radius: 50%;
  background: #dad4cd;
  color: #222;
}

.omnibox .site-info svg {
  width: 28px;
  height: 28px;
}

.omnibox .bookmark-star {
  width: 34px;
  height: 34px;
}

.url {
  flex: 1;
  margin-left: -16px;
  font-size: 27px;
  background: linear-gradient(90deg, #1f1f1f 216px, #636363 216px);
  background-clip: text;
  -webkit-background-clip: text;
  -webkit-text-fill-color: transparent;
}

.tools {
  display: flex;
  gap: 36px;
  align-items: center;
  width: 456px;
  padding-left: 36px;
}

.tools .wide {
  margin-right: 40px;
}

.tools .profile {
  width: 40px;
  height: 40px;
  border-radius: 50%;
  background: #512da8;
  color: #fff;
  font-size: 20px;
}

.bookmarks {
  display: flex;
  align-items: center;
  gap: 36px;
  height: 56px;
  padding-left: 38px;
  font-size: 24px;
}

.bookmarks .groups {
  margin-right: 30px;
}

.bookmarks .groups svg {
  width: 28px;
  height: 28px;
}

.bookmarks a {
  display: flex;
  align-items: center;
  gap: 16px;
  color: #4a4a4a;
}

.bookmarks a svg {
  width: 32px;
  height: 25px;
  color: #8a8784;
}

/* gmail */
.gmail {
  flex: 1;
  display: flex;
  flex-direction: column;
  background: linear-gradient(#f8faff calc(100% - 80px), #e6e7e9);
  font-family: "Roboto", sans-serif;
  font-size: 29px;
}

.gm-header {
  flex: none;
  display: flex;
  align-items: center;
  height: 128px;
  color: #5f6368;
}

.gm-header button svg {
  width: 48px;
  height: 48px;
}

.brand {
  display: flex;
  align-items: center;
  gap: 34px;
  width: 512px;
  padding-left: 48px;
}

.logo {
  display: flex;
  align-items: center;
  gap: 22px;
  color: #444746;
  font-size: 44px;
}

.logo svg {
  width: 60px;
  height: 45px;
}

.search {
  flex: 1;
  display: flex;
  align-items: center;
  height: 96px;
  padding: 0 30px 0 24px;
  border-radius: 48px;
  background: #e9eef6;
  color: #444746;
}

.search input {
  flex: 1;
  margin-left: 16px;
  color: #5f6368;
  font-size: 33px;
}

.search input::placeholder {
  color: #5f6368;
}

.gm-tools {
  display: flex;
  justify-content: flex-end;
  align-items: center;
  gap: 36px;
  width: 960px;
  padding-right: 28px;
}

.dark {
  color: #444746;
}

.account {
  width: 80px;
  height: 80px;
  margin-left: -4px;
  padding: 4px;
  border-radius: 50%;
  background: conic-gradient(from -65deg, #ea3323 0 110deg, #4285f4 110deg 190deg, #249a41 190deg 300deg, #fbbc04 300deg);
}

.account span {
  width: 72px;
  height: 72px;
  border: 4px solid #fff;
  border-radius: 50%;
  background: #512da8;
  color: #fff;
  font-size: 34px;
  line-height: 64px;
}

.gm-body {
  flex: 1;
  display: grid;
  grid-template-columns: 512px 1fr 112px;
  min-height: 0;
  padding-bottom: 34px;
}

.compose {
  justify-content: flex-start;
  gap: 33px;
  width: 285px;
  height: 112px;
  margin: 16px 0 32px 16px;
  padding-left: 34px;
  border-radius: 32px;
  background: #c2e7ff;
  color: #001d35;
  font-weight: 500;
}

.compose svg {
  width: 46px;
  height: 46px;
  color: #000;
}

.row {
  display: flex;
  align-items: center;
  gap: 37px;
  height: 64px;
  margin-right: 32px;
  padding: 0 24px 0 53px;
  border-radius: 0 32px 32px 0;
}

.row svg {
  width: 38px;
  height: 38px;
  color: #444746;
}

.row span {
  flex: 1;
}

.row em {
  color: #5f6368;
  font-size: 24px;
  font-style: normal;
  font-weight: 400;
}

.row.bold {
  font-size: 30px;
  font-weight: 700;
}

.row.current {
  background: #d3e3fd;
  color: #001d35;
  font-size: 30px;
  font-weight: 700;
}

.row.current svg {
  color: #041e49;
}

.row.current em {
  color: #001d35;
  font-weight: 700;
}

.row .soft {
  color: #747775;
}

.row .green-label {
  color: #16a766;
}

.labels-head {
  display: flex;
  justify-content: space-between;
  align-items: center;
  height: 64px;
  margin: 44px 0 11px;
  padding: 0 50px 0 52px;
}

.labels-head h2 {
  font-size: 33px;
  font-weight: 500;
}

.labels-head svg {
  display: block;
  width: 38px;
  height: 38px;
  color: #444746;
}

.panel {
  display: flex;
  flex-direction: column;
  min-width: 0;
  border-radius: 32px;
  background: #fff;
  color: #444746;
  overflow: hidden;
}

.panel button svg {
  display: block;
  width: 40px;
  height: 40px;
}

.panel-bar {
  flex: none;
  display: flex;
  align-items: center;
  gap: 48px;
  height: 98px;
  margin: 0 36px 0 4px;
  padding: 0 40px 0 28px;
  border-bottom: 2px solid #eceded;
}

.to-inbox {
  margin-right: 24px;
}

.divider {
  width: 2px;
  height: 40px;
  margin: 0 -8px 0 -10px;
  background: #e3e3e3;
}

.move {
  margin-right: -8px;
}

.count {
  margin-left: auto;
  margin-right: -8px;
  color: #5f6368;
  font-size: 24px;
}

.panel-bar .off, .panel-bar .off + button {
  margin-right: -10px;
}

.input-tool {
  gap: 14px;
}

.panel .input-tool .keyboard {
  width: 34px;
  height: 26px;
}

.panel .input-tool .caret {
  width: 16px;
  height: 10px;
}

.panel-scroll {
  flex: 1;
  display: flex;
  min-height: 0;
}

.thread {
  flex: 1;
  min-width: 0;
  padding-right: 42px;
}

.scrollbar {
  width: 22px;
  height: 876px;
  margin-top: 25px;
  background: #cacaca;
  border-left: 1px solid #bababa;
}

.subject {
  display: flex;
  align-items: center;
  height: 56px;
  padding-left: 144px;
}

.subject h1 {
  color: #1f1f1f;
  font-size: 45px;
  line-height: 56px;
}

.marker {
  width: 28px;
  height: 20px;
  margin: 0 20px;
}

.chip {
  display: flex;
  align-items: center;
  gap: 8px;
  height: 36px;
  padding: 0 8px;
  border-radius: 8px;
  background: #ddd;
  color: #555;
  font-size: 25px;
}

.panel .chip svg {
  width: 18px;
  height: 18px;
}

.actions {
  display: flex;
  gap: 32px;
  margin-left: auto;
}

.message {
  display: flex;
  gap: 32px;
  padding: 40px 0 0 32px;
}

.folded {
  height: 162px;
  border-bottom: 2px solid #eceded;
}

.avatar {
  flex: none;
  width: 80px;
  height: 80px;
  border-radius: 50%;
  color: #fff;
  font-size: 42px;
  line-height: 80px;
  text-align: center;
}

.teal { background: #00897b; }
.purple { background: #7e57c2; }

.message-main {
  flex: 1;
  min-width: 0;
}

.message-head {
  display: flex;
  align-items: center;
  gap: 40px;
  height: 40px;
}

.message-head h3 {
  flex: 1;
  color: #1f1f1f;
  font-size: 30px;
  font-weight: 700;
}

.message-head time {
  color: #5f6368;
  font-size: 24px;
}

.snippet {
  color: #5f6368;
  font-size: 26px;
  line-height: 40px;
  white-space: nowrap;
}

.to-me {
  gap: 14px;
  height: 40px;
  color: #5f6368;
  font-size: 24px;
}

.panel .to-me svg {
  width: 16px;
  height: 9px;
}

.body {
  margin-top: 16px;
  color: #222;
  font-family: "Liberation Sans", Arial, sans-serif;
  font-size: 29px;
  line-height: 44px;
}

.body p {
  margin-bottom: 44px;
}

.body .closing {
  margin-top: 88px;
}

.body b {
  color: #e1301e;
}

.hanab {
  display: flex;
  align-items: flex-start;
  gap: 9px;
  margin: 79px 0 0 41px;
  font-family: "Lato", sans-serif;
}

.hanab svg {
  width: 48px;
  height: 48px;
  margin-top: 20px;
}

.hanab strong, .hanab span {
  display: block;
  line-height: 64px;
}

.hanab strong {
  color: #ee3524;
  font-size: 74px;
  font-weight: 900;
}

.hanab span {
  color: #0b4a78;
  font-size: 59px;
}

.addons {
  display: flex;
  flex-direction: column;
  align-items: center;
  gap: 64px;
  padding-top: 32px;
}

.addons svg {
  display: block;
  width: 48px;
  height: 48px;
}

.addons hr {
  width: 40px;
  height: 2px;
  margin: 0;
  border: none;
  background: #dcdfe3;
}

.cal-day {
  fill: #4285f4;
  font: 700 8px "Roboto", sans-serif;
}

.addons .black {
  height: 48px;
  color: #000;
}

.addons .black svg {
  width: 40px;
  height: 40px;
}

.hide {
  margin-top: auto;
}

/* dock */
.dock {
  position: absolute;
  left: 105px;
  right: 105px;
  bottom: 10px;
  display: flex;
  justify-content: space-between;
  height: 144px;
  padding: 19px 18px 0;
  border: 2px solid #707070;
  border-radius: 44px;
  background: linear-gradient(90deg, #555 74%, #707070 79%, #555 86%);
}

.dock .app {
  position: relative;
  width: 92px;
  height: 92px;
}

.dock .app svg {
  width: 92px;
  height: 92px;
  overflow: visible;
}

.dock .open::after {
  content: "";
  position: absolute;
  left: 42px;
  bottom: -27px;
  width: 8px;
  height: 8px;
  border-radius: 50%;
  background: #000;
}

.dock-line {
  width: 2px;
  height: 108px;
  margin: -4px 12px 0;
  background: #2b2b2b;
}

.badge {
  position: absolute;
  right: -14px;
  top: -11px;
  width: 42px;
  height: 42px;
  border-radius: 50%;
  background: #f03b32;
  color: #fff;
  font-size: 24px;
  line-height: 42px;
}

.adobe {
  font: 700 54px "Open Sans", sans-serif;
}

.office {
  fill: #fff;
  font: 700 25px "Open Sans", sans-serif;
}

.pdf {
  fill: #777;
  font: 500 14px "Inter", sans-serif;
}
```
